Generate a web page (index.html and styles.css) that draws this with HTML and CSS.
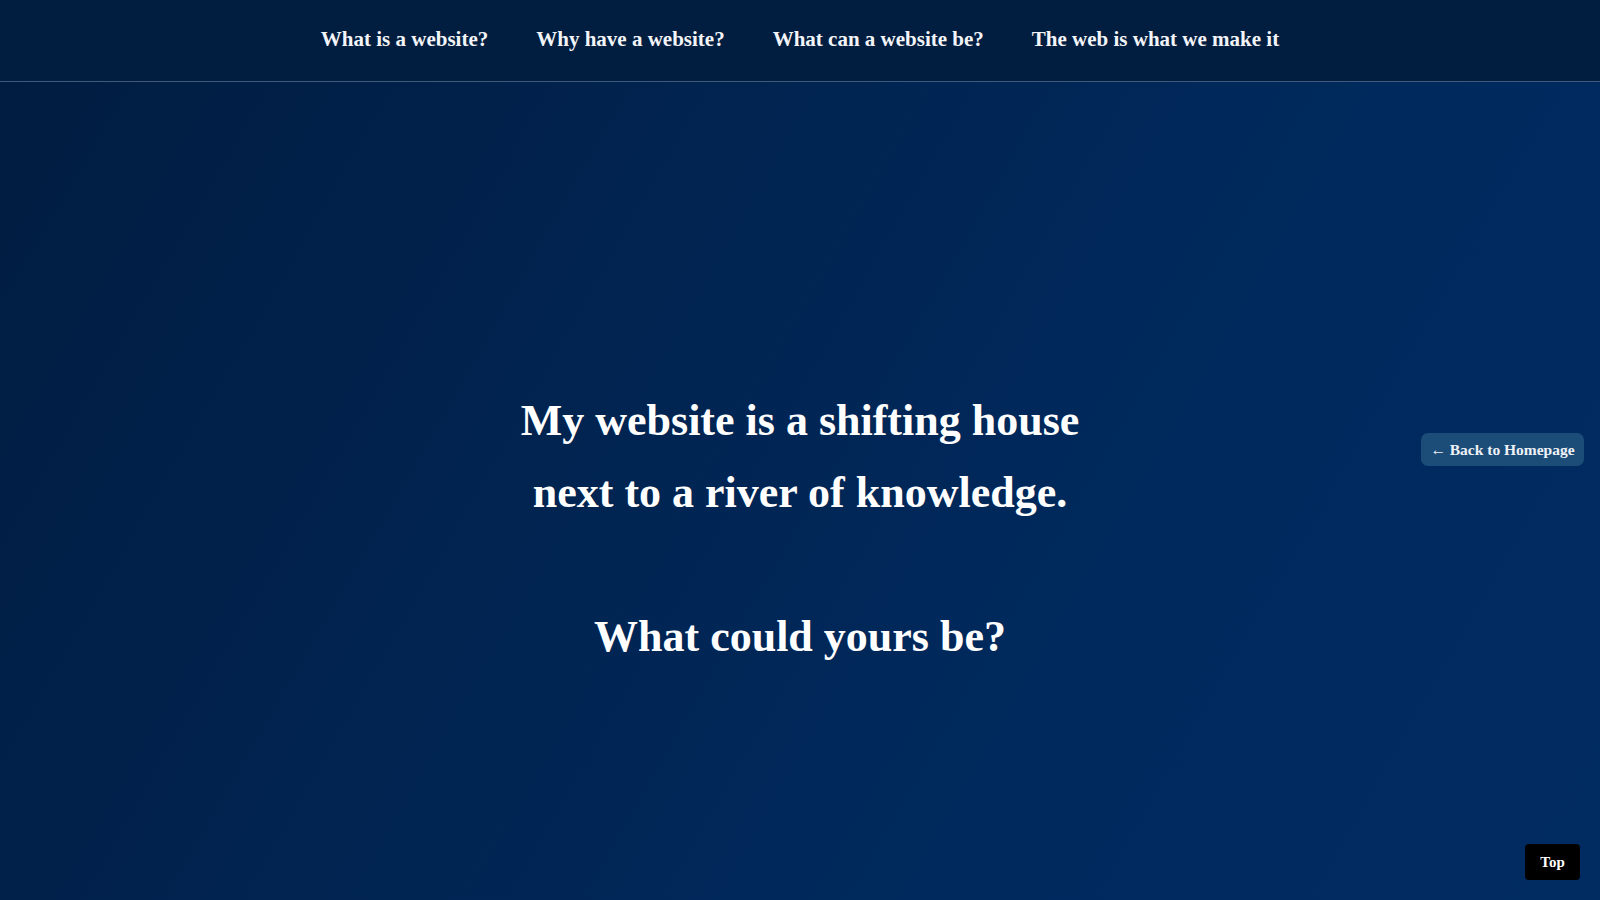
FILE: index.html
```html
<!DOCTYPE html>
<html lang="en">
<head>
<meta charset="utf-8">
<title>What could yours be?</title>
<link rel="stylesheet" href="styles.css">
</head>
<body>
<header class="site-header">
  <nav class="nav">
    <a class="nav-link" href="#">What is a website?</a>
    <a class="nav-link" href="#">Why have a website?</a>
    <a class="nav-link" href="#">What can a website be?</a>
    <a class="nav-link" href="#">The web is what we make it</a>
  </nav>
</header>
<main class="hero">
  <p class="statement">My website is a shifting house<br>next to a river of knowledge.<br><br>What could yours be?</p>
</main>
<a class="back-btn" href="#">&larr; Back to Homepage</a>
<a class="top-btn" href="#">Top</a>
</body>
</html>
```
FILE: styles.css
```css
* { box-sizing: border-box; }
html, body { margin: 0; height: 100%; }
body {
  font-family: "Liberation Serif", "DejaVu Serif", serif;
  color: #fff;
  background: linear-gradient(120deg, #011c40 0%, #01234f 35%, #002a5e 70%, #012c62 100%);
  min-height: 900px;
  display: flex;
  flex-direction: column;
}
a { color: inherit; text-decoration: none; }
.site-header {
  height: 82px;
  background: #011e40;
  border-bottom: 1px solid #3f5a7c;
  display: flex;
  align-items: center;
  justify-content: center;
  padding-bottom: 2px;
}
.nav {
  display: flex;
  gap: 48px;
}
.nav-link {
  font-size: 21px;
  font-weight: bold;
  color: #f3f4f7;
}
.hero {
  flex: 1;
  display: flex;
  justify-content: center;
  align-items: flex-start;
  padding-top: 303px;
}
.statement {
  margin: 0;
  font-size: 44px;
  line-height: 72px;
  font-weight: bold;
  text-align: center;
}
.back-btn {
  position: fixed;
  top: 433px;
  right: 16px;
  width: 163px;
  height: 33px;
  border-radius: 7px;
  background: #1c4c78;
  color: #eef2f7;
  font-size: 15.5px;
  font-weight: bold;
  display: flex;
  align-items: center;
  justify-content: center;
}
.top-btn {
  position: fixed;
  right: 20px;
  bottom: 20px;
  width: 55px;
  height: 36px;
  border-radius: 4px;
  background: #000;
  color: #fff;
  font-size: 15px;
  font-weight: bold;
  display: flex;
  align-items: center;
  justify-content: center;
}
```
